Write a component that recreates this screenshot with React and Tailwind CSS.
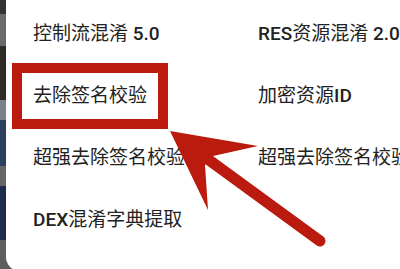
import React from 'react';

const rows = [
  [['控制流混淆 ', '5.0'], ['RES', '资源混淆 ', '2.0']],
  [['去除签名校验'], ['加密资源', 'ID']],
  [['超强去除签名校验'], ['超强去除签名校验']],
  [['DEX', '混淆字典提取'], []],
];

// Latin bits render heavier than the CJK ones in the shot
function Label({ parts }) {
  return (
    <span className="whitespace-nowrap">
      {parts.map((p, i) =>
        /[A-Za-z0-9]/.test(p) ? (
          <span key={i} className="font-medium">{p}</span>
        ) : (
          <span key={i}>{p}</span>
        )
      )}
    </span>
  );
}

export default function App() {
  return (
    <div
      className="relative w-[400px] h-[269px] overflow-hidden flex bg-[#5d5d5d]"
      style={{ fontFamily: 'Roboto, "Noto Sans CJK SC", sans-serif' }}
    >
      {/* background peeking out behind the dialog */}
      <div className="w-[6px] shrink-0 flex flex-col">
        <div className="h-[14px] bg-[#333]" />
        <div className="h-[32px] bg-[#6a6a6a]" />
        <div className="h-[54px] bg-[#2e2b27]" />
        <div className="h-[20px] bg-[#7a8088]" />
        <div className="h-[46px] bg-[#2d3f5e]" />
        <div className="h-[20px] bg-[#666]" />
        <div className="h-[54px] bg-[#1f2b4a]" />
        <div className="flex-1 bg-[#5e5e5e]" />
      </div>

      {/* dialog */}
      <div className="flex-1 h-[271px] bg-white rounded-bl-[14px] pl-[27px] pt-[3px] overflow-hidden">
        {rows.map((row, r) => (
          <div key={r} className="grid grid-cols-[225px_225px] h-[62px] items-center text-[19px] text-[#222]">
            <Label parts={row[0]} />
            <Label parts={row[1]} />
          </div>
        ))}
      </div>

      {/* annotation: red box */}
      <div className="absolute left-[12px] top-[63px] w-[156px] h-[66px] border-[10px] border-[#bb1a0e]" />

      {/* annotation: arrow */}
      <svg className="absolute inset-0" width="400" height="269" viewBox="0 0 400 269">
        <line x1="209" y1="160" x2="320" y2="241" stroke="#bb1a0e" strokeWidth="11" strokeLinecap="round" />
        <polygon points="170,131 258,146 213,156 205,165 208,210" fill="#bb1a0e" />
      </svg>
    </div>
  );
}
